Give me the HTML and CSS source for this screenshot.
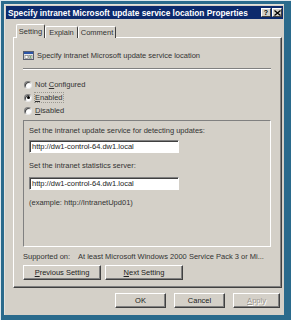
FILE: index.html
```html
<!DOCTYPE html>
<html>
<head>
<meta charset="utf-8">
<link rel="stylesheet" href="styles.css">
</head>
<body>
<div class="frame">
  <div class="window">
    <div class="titlebar">
      <span class="title">Specify intranet Microsoft update service location Properties</span>
      <span class="tbtns">
        <span class="tbtn">?</span>
        <span class="tbtn x">
          <svg width="7" height="6" viewBox="0 0 7 6"><path d="M0.5 0.5 L6.5 5.5 M6.5 0.5 L0.5 5.5" stroke="#000" stroke-width="1.3"/></svg>
        </span>
      </span>
    </div>
    <div class="body">
      <div class="tabs">
        <div class="tab active">Setting</div>
        <div class="tab t2">Explain</div>
        <div class="tab t3">Comment</div>
      </div>
      <div class="panel">
        <div class="heading">
          <svg class="icon" width="11" height="9" viewBox="0 0 11 9">
            <rect x="0.5" y="0.5" width="10" height="8" fill="#e8e8e8" stroke="#5a6070"/>
            <rect x="1" y="1" width="9" height="2" fill="#2c55a8"/>
            <rect x="2" y="4.5" width="3" height="3" fill="#fff" stroke="#707070" stroke-width="0.6"/>
            <rect x="6" y="4.5" width="3" height="3" fill="#fff" stroke="#707070" stroke-width="0.6"/>
            <rect x="6.8" y="5.3" width="1.4" height="1.4" fill="#3a8a3a"/>
          </svg>
          <span>Specify intranet Microsoft update service location</span>
        </div>
        <div class="sep"></div>
        <div class="radios">
          <div class="radio"><span class="rb"></span><span>Not <u>C</u>onfigured</span></div>
          <div class="radio"><span class="rb on"></span><span class="focus"><u>E</u>nabled</span></div>
          <div class="radio"><span class="rb"></span><span><u>D</u>isabled</span></div>
        </div>
        <div class="group">
          <div class="line">Set the intranet update service for detecting updates:</div>
          <div class="textbox tb1">http://dw1-control-64.dw1.local</div>
          <div class="line l2">Set the intranet statistics server:</div>
          <div class="textbox tb2">http://dw1-control-64.dw1.local</div>
          <div class="line l3">(example: http://IntranetUpd01)</div>
        </div>
        <div class="supported">
          <span class="lbl">Supported on:</span>
          <span>At least Microsoft Windows 2000 Service Pack 3 or Mi...</span>
        </div>
        <div class="navbtns">
          <div class="btn nav"><u>P</u>revious Setting</div>
          <div class="btn nav"><u>N</u>ext Setting</div>
        </div>
      </div>
      <div class="dlgbtns">
        <div class="btn ok">OK</div>
        <div class="btn cancel">Cancel</div>
        <div class="btn apply disabled"><u>A</u>pply</div>
      </div>
    </div>
  </div>
</div>
</body>
</html>
```

FILE: styles.css
```css
* { box-sizing: border-box; }
html, body { margin: 0; padding: 0; background: #ffffff; }
body {
  font-family: "Liberation Sans", Arial, sans-serif;
  font-size: 7.5px;
  color: #1a1a1a;
}
.frame {
  width: 291px;
  height: 320px;
  background: #2a6a8c;
  border-left: 1px solid #dde8ee;
  border-top: 1px solid #dde8ee;
  padding: 3px 7px 5px 3px;
}
.window {
  width: 280px;
  height: 311px;
  background: #d4d0c8;
  padding: 1px;
  display: flex;
  flex-direction: column;
  border-left: 1px solid #e4e2dc;
  border-top: 1px solid #e4e2dc;
}
.titlebar {
  height: 13px;
  background: #0c2a6c;
  display: flex;
  align-items: center;
  justify-content: space-between;
  padding: 0 1px 0 2px;
}
.title {
  color: #ffffff;
  font-weight: bold;
  font-size: 8.3px;
  white-space: nowrap;
}
.tbtns { display: flex; gap: 1px; }
.tbtn {
  width: 10px;
  height: 9px;
  background: #d4d0c8;
  border: 1px solid;
  border-color: #fff #404040 #404040 #fff;
  display: flex;
  align-items: center;
  justify-content: center;
  font-weight: bold;
  font-size: 7px;
  line-height: 1;
  color: #000;
}
.body {
  flex: 1;
  display: flex;
  flex-direction: column;
  padding: 5px 2px 0 7px;
}
.tabs {
  display: flex;
  align-items: flex-end;
  height: 14px;
  padding-left: 3px;
  position: relative;
  z-index: 1;
  margin-bottom: -1px;
}
.tab {
  height: 12px;
  border: 1px solid;
  border-color: #fff #404040 transparent #fff;
  border-bottom: none;
  border-radius: 2px 2px 0 0;
  display: flex;
  align-items: center;
  justify-content: center;
  background: #d4d0c8;
  color: #333;
}
.tab.active {
  width: 29px;
  height: 14px;
  padding-bottom: 1px;
}
.tab.t2 { width: 33px; }
.tab.t3 { width: 38px; }
.panel {
  width: 269px;
  height: 251px;
  border: 1px solid;
  border-color: #fff #404040 #404040 #fff;
  box-shadow: inset -1px -1px 0 #808080;
  padding: 12px 10px 0 9px;
  display: flex;
  flex-direction: column;
}
.heading {
  height: 10px;
  display: flex;
  align-items: center;
  gap: 3px;
  color: #333;
}
.icon { display: block; flex: none; }
.sep {
  margin-top: 8px;
  height: 2px;
  border-top: 1px solid #808080;
  border-bottom: 1px solid #fff;
}
.radios { margin-top: 8px; display: flex; flex-direction: column; }
.radio {
  height: 13px;
  display: flex;
  align-items: center;
  gap: 3px;
  padding-left: 1px;
  color: #333;
}
.rb {
  width: 8px;
  height: 8px;
  border-radius: 50%;
  background: #fff;
  border: 1px solid;
  border-color: #808080 #e8e8e8 #e8e8e8 #808080;
  box-shadow: inset 1px 1px 0 #404040;
  display: flex;
  align-items: center;
  justify-content: center;
}
.rb.on::after {
  content: "";
  width: 3px;
  height: 3px;
  border-radius: 50%;
  background: #000;
}
.focus { outline: 1px dotted #9a9890; outline-offset: 0; }
.group {
  margin-top: 3px;
  height: 127px;
  border: 1px solid;
  border-color: #808080 #fff #fff #808080;
  padding: 5px 0 0 5px;
  display: flex;
  flex-direction: column;
  color: #333;
}
.line { height: 10px; line-height: 10px; white-space: nowrap; }
.textbox {
  width: 150px;
  height: 13px;
  background: #fff;
  border: 1px solid;
  border-color: #808080 #fff #fff #808080;
  box-shadow: inset 1px 1px 0 #404040;
  padding-left: 2px;
  line-height: 11px;
  white-space: nowrap;
  color: #222;
}
.tb1 { margin-top: 4px; }
.l2 { margin-top: 8px; }
.tb2 { margin-top: 6px; }
.l3 { margin-top: 8px; }
.supported {
  margin-top: 4px;
  height: 10px;
  display: flex;
  align-items: center;
  white-space: nowrap;
  color: #333;
}
.supported .lbl { width: 55px; flex: none; }
.navbtns { margin-top: 4px; display: flex; gap: 4px; }
.btn {
  height: 15px;
  background: #d4d0c8;
  border: 1px solid;
  border-color: #fff #404040 #404040 #fff;
  box-shadow: inset -1px -1px 0 #808080;
  display: flex;
  align-items: center;
  justify-content: center;
  color: #222;
  white-space: nowrap;
}
.btn.nav { width: 78px; }
.dlgbtns {
  margin-top: 5px;
  display: flex;
  justify-content: flex-end;
  gap: 8px;
  padding-right: 1px;
}
.btn.ok { width: 51px; }
.btn.cancel { width: 51px; }
.btn.apply { width: 47px; }
.btn.disabled { color: #9a978f; text-shadow: 1px 1px 0 #fff; }
```
